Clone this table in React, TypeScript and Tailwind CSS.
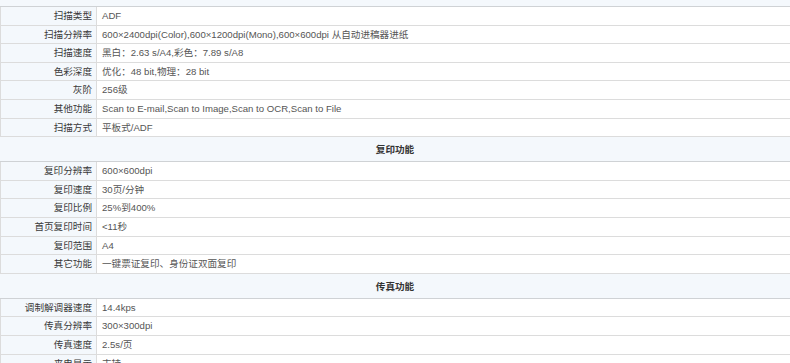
import React from 'react';

type Section = { title: string; rows: [string, string][] };

const sections: Section[] = [
  {
    title: '扫描功能',
    rows: [
      ['扫描类型', 'ADF'],
      ['扫描分辨率', '600×2400dpi(Color),600×1200dpi(Mono),600×600dpi 从自动进稿器进纸'],
      ['扫描速度', '黑白：2.63 s/A4,彩色：7.89 s/A8'],
      ['色彩深度', '优化：48 bit,物理：28 bit'],
      ['灰阶', '256级'],
      ['其他功能', 'Scan to E-mail,Scan to Image,Scan to OCR,Scan to File'],
      ['扫描方式', '平板式/ADF'],
    ],
  },
  {
    title: '复印功能',
    rows: [
      ['复印分辨率', '600×600dpi'],
      ['复印速度', '30页/分钟'],
      ['复印比例', '25%到400%'],
      ['首页复印时间', '<11秒'],
      ['复印范围', 'A4'],
      ['其它功能', '一键票证复印、身份证双面复印'],
    ],
  },
  {
    title: '传真功能',
    rows: [
      ['调制解调器速度', '14.4kps'],
      ['传真分辨率', '300×300dpi'],
      ['传真速度', '2.5s/页'],
      ['来电显示', '支持'],
    ],
  },
];

function SectionHeader({ title }: { title: string }) {
  return (
    <div className="flex h-[25px] items-center justify-center border-b border-[#cfd2d5] bg-[#f4f8fc] pt-[2px] font-bold text-[#333]">
      {title}
    </div>
  );
}

function SpecRow({ label, value }: { label: string; value: string }) {
  return (
    <div className="flex h-[18.6px] border-b border-[#dcdcdc]">
      <div className="flex w-[97px] shrink-0 items-center justify-end border-x border-[#dcdcdc] bg-[#f4f8fc] pr-[4px] text-[#3a3a3a]">
        {label}
      </div>
      <div className="flex items-center whitespace-nowrap pl-[5px] text-[#555]">{value}</div>
    </div>
  );
}

export default function App() {
  return (
    <div className="h-[363px] w-[790px] overflow-hidden bg-white">
      <div
        className="-mt-[18px] text-[9.6px] leading-none"
        style={{ fontFamily: '"Liberation Sans", Arial, "Noto Sans CJK SC", sans-serif' }}
      >
        {sections.map((s) => (
          <div key={s.title}>
            <SectionHeader title={s.title} />
            {s.rows.map(([l, v]) => (
              <SpecRow key={l} label={l} value={v} />
            ))}
          </div>
        ))}
      </div>
    </div>
  );
}
